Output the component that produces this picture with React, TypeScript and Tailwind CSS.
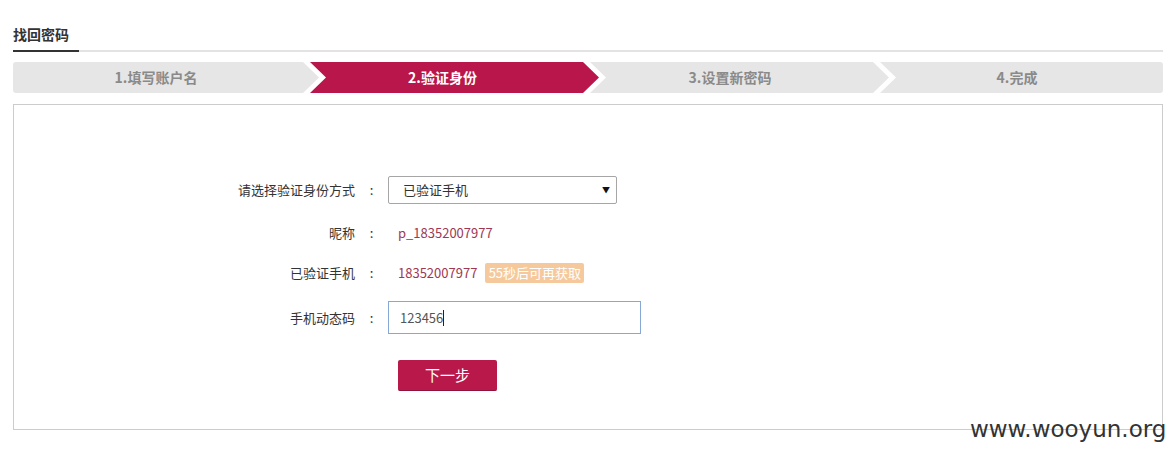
import React from "react";

const cjk = { fontFamily: '"Noto Sans CJK SC", "Noto Sans", sans-serif' };

function Step({
  label,
  active,
  kind,
  width,
  pr,
}: {
  label: string;
  active?: boolean;
  kind: "first" | "mid" | "last";
  width: string;
  pr: string;
}) {
  const clip =
    kind === "first"
      ? "[clip-path:polygon(0_0,calc(100%_-_16px)_0,100%_50%,calc(100%_-_16px)_100%,0_100%)] rounded-l-[3px]"
      : kind === "last"
      ? "[clip-path:polygon(0_0,100%_0,100%_100%,0_100%,16px_50%)] rounded-r-[3px] -ml-[9px]"
      : "[clip-path:polygon(0_0,calc(100%_-_16px)_0,100%_50%,calc(100%_-_16px)_100%,0_100%,16px_50%)] -ml-[9px]";
  return (
    <div
      className={`${width} ${pr} ${clip} h-[31px] flex items-center justify-center text-[14px] font-bold ${
        active ? "bg-[#b9174b] text-white" : "bg-[#e6e6e6] text-[#8a8a8a]"
      }`}
    >
      {label}
    </div>
  );
}

function Row({
  label,
  children,
  h,
  mt,
}: {
  label: string;
  children: React.ReactNode;
  h: string;
  mt: string;
}) {
  return (
    <div className={`flex items-center ${h} ${mt}`}>
      <div className="w-[341px] text-right text-[13px] text-[#333]">{label}</div>
      <div className="w-[33px] text-center text-[13px] text-[#333]">:</div>
      <div className="flex items-center h-full">{children}</div>
    </div>
  );
}

export default function App() {
  return (
    <div className="relative w-[1176px] h-[460px] bg-white px-[13px]" style={cjk}>
      {/* Header */}
      <div className="border-b-2 border-[#e3e3e3] flex">
        <div className="mt-[24px] -mb-[2px] pb-[6px] border-b-2 border-[#333] w-[66px] text-[14px] leading-[20px] font-bold text-[#333]">
          找回密码
        </div>
      </div>

      {/* Steps */}
      <div className="mt-[10px] flex">
        <Step label="1.填写账户名" kind="first" width="w-[306px]" pr="pr-[20px]" />
        <Step label="2.验证身份" kind="mid" active width="w-[289px]" pr="pr-[24px]" />
        <Step label="3.设置新密码" kind="mid" width="w-[299px]" pr="pr-[19px]" />
        <Step label="4.完成" kind="last" width="w-[283px]" pr="pr-[9px]" />
      </div>

      {/* Main box */}
      <div className="mt-[11px] h-[326px] border border-[#cccccc] pt-[71px]">
        <Row label="请选择验证身份方式" h="h-[28px]" mt="mt-0">
          <div className="w-[229px] h-[28px] border border-[#a6a6a6] rounded-[2px] flex items-center justify-between pl-[14px] pr-[6px] text-[13px] text-[#333]">
            <span>已验证手机</span>
            <span className="text-[8px] text-[#111]">▼</span>
          </div>
        </Row>
        <Row label="昵称" h="h-[28px]" mt="mt-[15px]">
          <span className="pl-[10px] text-[13px] text-[#9e3853]">p_18352007977</span>
        </Row>
        <Row label="已验证手机" h="h-[28px]" mt="mt-[12px]">
          <span className="pl-[10px] text-[13px] text-[#9e3853]">18352007977</span>
          <span className="ml-[8px] h-[20px] w-[99px] flex items-center justify-center bg-[#f6c99c] text-white text-[13px] rounded-[2px]">
            55秒后可再获取
          </span>
        </Row>
        <Row label="手机动态码" h="h-[33px]" mt="mt-[14px]">
          <div className="w-[253px] h-[33px] border border-[#86a8d4] flex items-center pl-[11px] text-[13px] text-[#555]">
            <span>123456</span>
            <span className="inline-block w-px h-[16px] bg-[#222]" />
          </div>
        </Row>
        <div className="flex mt-[26px]">
          <div className="w-[384px]" />
          <div className="w-[99px] h-[31px] bg-[#b9184b] rounded-[2px] border-b border-[#8e1239] flex items-center justify-center text-white text-[15px]">
            下一步
          </div>
        </div>
      </div>

      {/* Watermark */}
      <div
        className="absolute left-[970px] top-[414px] text-[23px] leading-[30px] text-[#333]"
        style={{ fontFamily: '"DejaVu Sans", sans-serif' }}
      >
        www.wooyun.org
      </div>
    </div>
  );
}
